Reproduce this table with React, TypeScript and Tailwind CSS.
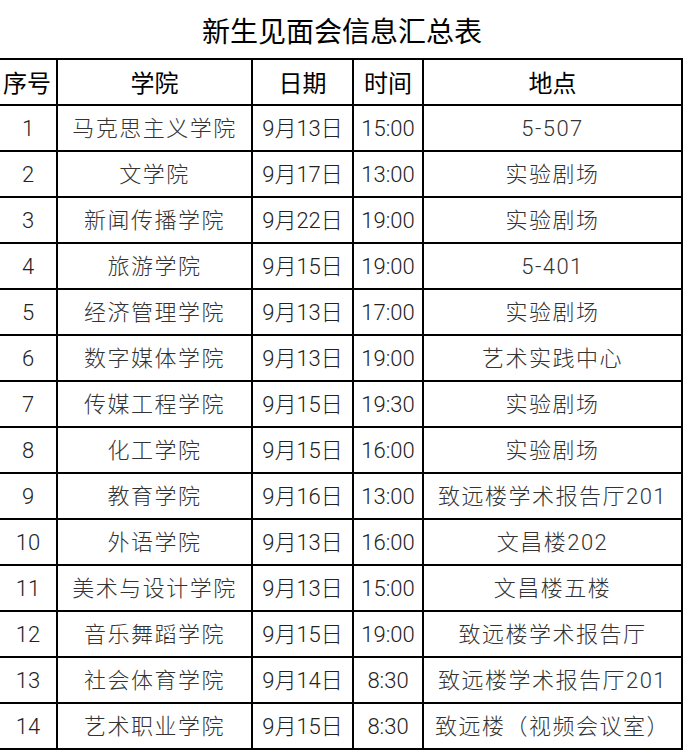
import React from "react";

const rows: [string, string, string, string, string][] = [
  ["1", "马克思主义学院", "9月13日", "15:00", "5-507"],
  ["2", "文学院", "9月17日", "13:00", "实验剧场"],
  ["3", "新闻传播学院", "9月22日", "19:00", "实验剧场"],
  ["4", "旅游学院", "9月15日", "19:00", "5-401"],
  ["5", "经济管理学院", "9月13日", "17:00", "实验剧场"],
  ["6", "数字媒体学院", "9月13日", "19:00", "艺术实践中心"],
  ["7", "传媒工程学院", "9月15日", "19:30", "实验剧场"],
  ["8", "化工学院", "9月15日", "16:00", "实验剧场"],
  ["9", "教育学院", "9月16日", "13:00", "致远楼学术报告厅201"],
  ["10", "外语学院", "9月13日", "16:00", "文昌楼202"],
  ["11", "美术与设计学院", "9月13日", "15:00", "文昌楼五楼"],
  ["12", "音乐舞蹈学院", "9月15日", "19:00", "致远楼学术报告厅"],
  ["13", "社会体育学院", "9月14日", "8:30", "致远楼学术报告厅201"],
  ["14", "艺术职业学院", "9月15日", "8:30", "致远楼（视频会议室）"],
];

const cell =
  "h-[46px] flex items-center justify-center border-b-2 border-r-2 border-black text-[22px] leading-none pt-[2px] font-light font-['Roboto','Noto_Sans_CJK_SC',sans-serif]";

const head =
  "h-[46px] flex items-center justify-center border-b-2 border-r-2 border-black text-[24px] text-black leading-none pt-[3px]";

export default function App() {
  return (
    <div className="w-[684px] h-[750px] bg-white overflow-hidden font-['Liberation_Sans','Noto_Sans_CJK_SC',sans-serif]">
      <div className="h-[58px] flex items-center justify-center text-[28px] text-black leading-none pt-[8px]">
        新生见面会信息汇总表
      </div>
      <div className="grid grid-cols-[58px_195px_101px_70px_259px] border-t-2 border-black w-[683px]">
        <div className={`${head} pr-[2px]`}>序号</div>
        <div className={head}>学院</div>
        <div className={head}>日期</div>
        <div className={head}>时间</div>
        <div className={head}>地点</div>
        {rows.map((r) => (
          <React.Fragment key={r[0]}>
            <div className={`${cell} text-[#222]`}>{r[0]}</div>
            <div className={`${cell} text-[#333] tracking-[1.5px]`}>{r[1]}</div>
            <div className={`${cell} text-[#222]`}>{r[2]}</div>
            <div className={`${cell} text-[#222]`}>{r[3]}</div>
            <div className={`${cell} text-[#333] tracking-[1.5px] whitespace-nowrap`}>{r[4]}</div>
          </React.Fragment>
        ))}
      </div>
    </div>
  );
}
